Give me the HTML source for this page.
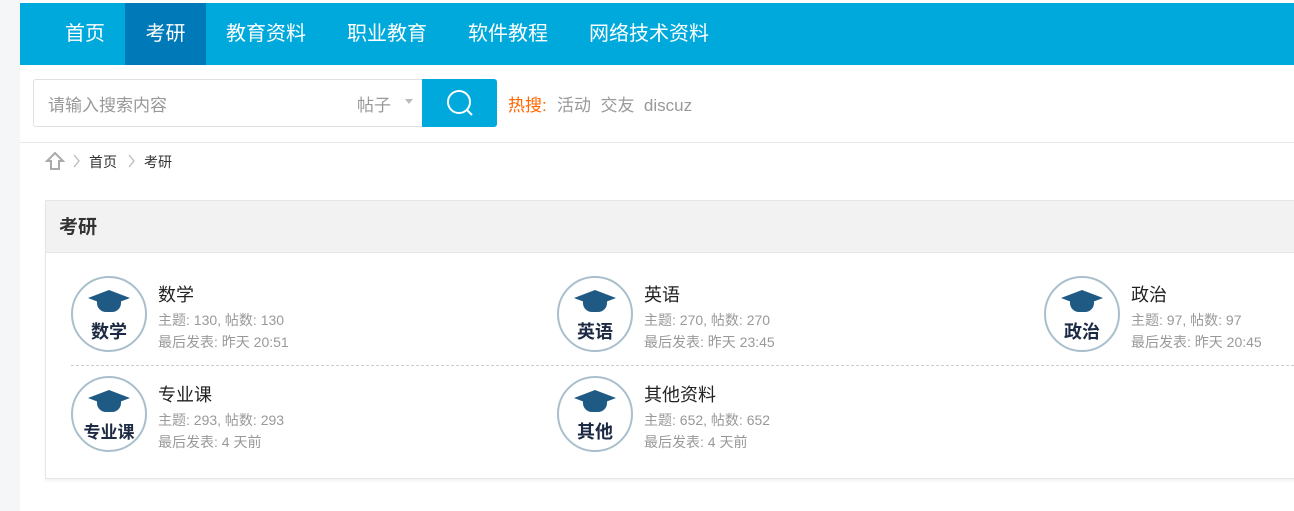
<!DOCTYPE html><html><head><meta charset="utf-8"><style>
*{margin:0;padding:0;box-sizing:border-box}
body{width:1294px;height:511px;overflow:hidden;background:#fff;font-family:"Liberation Sans","Noto Sans CJK SC",sans-serif;position:relative}
.lstrip{position:absolute;left:0;top:0;width:20px;height:511px;background:#f5f6f8}
.nav{position:absolute;left:20px;top:3px;right:0;height:62px;background:#00a9dc;color:#fff;font-size:20px}
.nav span{position:absolute;top:0;height:62px;line-height:62px}
.srch{position:absolute;left:20px;top:65px;right:0;height:78px;border-bottom:1px solid #e8e8e8;background:#fff}
.box{position:absolute;left:13px;top:14px;width:464px;height:48px;border:1px solid #e0e0e0;border-radius:3px;background:#fff}
.btn{position:absolute;left:388px;top:-1px;width:75px;height:48px;background:#00a9dc;border-radius:0 3px 3px 0}
.item{position:absolute}
.ic{position:absolute;left:0;top:0;width:76px;height:76px;border-radius:50%;border:2px solid #a9bfcc;background:#fff}
.ic b{position:absolute;left:0;right:0;top:40px;text-align:center;font-size:18px;color:#1d2a44;font-weight:bold}
.ic::before{content:"";position:absolute;left:15px;top:12px;width:42px;height:16px;background:#1f5a85;clip-path:polygon(50% 0,100% 50%,50% 100%,0 50%)}
.ic::after{content:"";position:absolute;left:24px;top:21px;width:24px;height:13px;background:#1f5a85;border-radius:0 0 9px 9px}
.t{position:absolute;left:87px;top:5px;font-size:18px;color:#222;white-space:nowrap}
.s{position:absolute;left:87px;font-size:14px;color:#999;white-space:nowrap}
</style></head><body>
<div class="lstrip"></div>
<div class="nav">
<span style="left:45px">首页</span>
<span style="left:105px;width:81px;background:#0079b9;text-align:center">考研</span>
<span style="left:206px">教育资料</span>
<span style="left:327px">职业教育</span>
<span style="left:448px">软件教程</span>
<span style="left:569px">网络技术资料</span>
</div>
<div class="srch">
<div class="box">
<span style="position:absolute;left:14px;top:11px;font-size:17px;color:#999">请输入搜索内容</span>
<span style="position:absolute;left:323px;top:11px;font-size:17px;color:#999">帖子</span>
<span style="position:absolute;left:371px;top:19px;border:4px solid transparent;border-top:5px solid #bbb"></span>
<div class="btn"><svg width="75" height="48"><circle cx="37" cy="23" r="11" fill="none" stroke="#fff" stroke-width="2"/><line x1="45" y1="31" x2="50" y2="36" stroke="#fff" stroke-width="2"/></svg></div>
</div>
<span style="position:absolute;left:488px;top:26px;font-size:17px;color:#f60">热搜:</span>
<span style="position:absolute;left:537px;top:26px;font-size:17px;color:#999">活动&nbsp; 交友&nbsp; discuz</span>
</div>
<svg style="position:absolute;left:45px;top:151px" width="20" height="20"><path d="M10 2 L18 10 H14 V18 H6 V10 H2 Z" fill="none" stroke="#aaa" stroke-width="2"/></svg>
<svg style="position:absolute;left:72px;top:153px" width="10" height="16"><path d="M2 2 L7 8 L2 14" fill="none" stroke="#bbb" stroke-width="1.3"/></svg>
<span style="position:absolute;left:89px;top:152px;font-size:14px;color:#333">首页</span>
<svg style="position:absolute;left:127px;top:153px" width="10" height="16"><path d="M2 2 L7 8 L2 14" fill="none" stroke="#bbb" stroke-width="1.3"/></svg>
<span style="position:absolute;left:144px;top:152px;font-size:14px;color:#333">考研</span>
<div style="position:absolute;left:45px;top:200px;width:1260px;height:279px;border:1px solid #e6e6e6;box-shadow:0 2px 2px rgba(0,0,0,.05)">
<div style="height:52px;background:#f2f2f2;border-bottom:1px solid #e6e6e6;font-size:19px;font-weight:bold;color:#333;line-height:54px;padding-left:13px">考研</div>
<div style="position:absolute;left:25px;top:164px;right:0;border-top:1px dashed #ccc"></div>
</div>
<div class="item" style="left:71px;top:276px"><div class="ic"><b>数学</b></div><div class="t">数学</div><div class="s" style="top:34px">主题: 130, 帖数: 130</div><div class="s" style="top:56px">最后发表: 昨天 20:51</div></div>
<div class="item" style="left:557px;top:276px"><div class="ic"><b>英语</b></div><div class="t">英语</div><div class="s" style="top:34px">主题: 270, 帖数: 270</div><div class="s" style="top:56px">最后发表: 昨天 23:45</div></div>
<div class="item" style="left:1044px;top:276px"><div class="ic"><b>政治</b></div><div class="t">政治</div><div class="s" style="top:34px">主题: 97, 帖数: 97</div><div class="s" style="top:56px">最后发表: 昨天 20:45</div></div>
<div class="item" style="left:71px;top:376px"><div class="ic"><b style="font-size:17px">专业课</b></div><div class="t">专业课</div><div class="s" style="top:34px">主题: 293, 帖数: 293</div><div class="s" style="top:56px">最后发表: 4 天前</div></div>
<div class="item" style="left:557px;top:376px"><div class="ic"><b>其他</b></div><div class="t">其他资料</div><div class="s" style="top:34px">主题: 652, 帖数: 652</div><div class="s" style="top:56px">最后发表: 4 天前</div></div>
</body></html>
